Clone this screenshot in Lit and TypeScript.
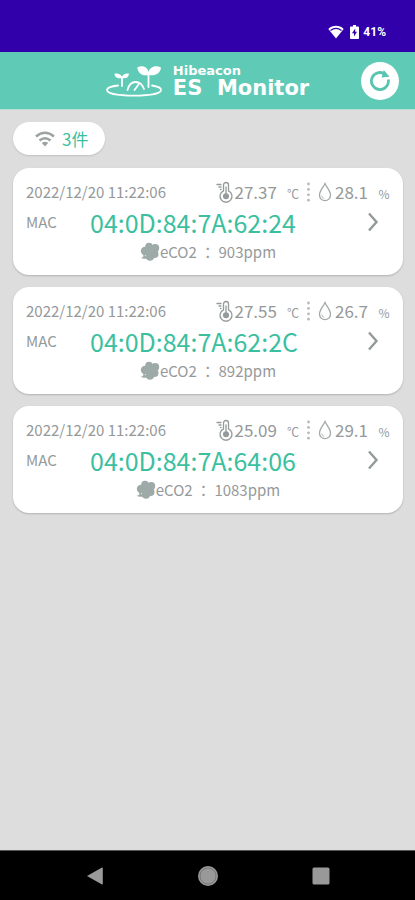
import { LitElement, html, css, svg } from "lit";
import { customElement, property, state } from "lit/decorators.js";

interface Reading {
  time: string;
  temperature: string;
  humidity: string;
  mac: string;
  eco2: number;
}

@customElement("sensor-card")
export class SensorCard extends LitElement {
  @property({ attribute: false }) reading!: Reading;

  static styles = css`
    :host {
      display: block;
    }
    .card {
      display: block;
      box-sizing: border-box;
      width: 100%;
      padding: 9px 13px 8px;
      border-radius: 16px;
      background: #fff;
      box-shadow: 0 1px 2px #0003;
      color: #959999;
      text-decoration: none;
      font-size: 15px;
      line-height: 30px;
      white-space: nowrap;
    }
    .row {
      display: flex;
      align-items: center;
      height: 30px;
    }
    .top {
      justify-content: space-between;
    }
    .values {
      display: flex;
      align-items: center;
      font-size: 17px;
    }
    .thermo {
      width: 18px;
      height: 22px;
      margin-right: 1px;
    }
    .drop {
      width: 14px;
      height: 20px;
      margin-right: 3px;
    }
    .unit {
      width: 12px;
      margin-left: 10px;
      padding-top: 4px;
      font-size: 12px;
      text-align: center;
    }
    .dots {
      width: 3px;
      height: 20px;
      margin: 0 8px;
    }
    .label {
      width: 64px;
    }
    .mac {
      flex: 1;
      color: #3cbf9f;
      font-size: 25px;
    }
    .chevron {
      width: 12px;
      height: 22px;
      margin-right: 11px;
    }
    .gas {
      justify-content: center;
    }
    .cloud {
      width: 20px;
      height: 20px;
    }
  `;

  render() {
    const r = this.reading;
    return html`<a class="card" href="#${r.mac}">
      <div class="row top">
        <time>${r.time}</time>
        <div class="values">
          <svg class="thermo" viewBox="0 0 18 22" fill="none" stroke="#959b9b" stroke-width="1.3" stroke-linecap="round" aria-hidden="true">
            <path d="M7.500 9.800V4a2.500 2.500 0 0 1 5 0v5.800a6 6 0 1 1-5 0Z" />
            <path d="M10 6v8M1 3.500h4M3 6h2M4.500 8.500h.5" />
            <circle cx="10" cy="15.300" r="2.400" fill="#959b9b" />
          </svg>
          <span>${r.temperature}</span>
          <span class="unit">℃</span>
          <svg class="dots" viewBox="0 0 3 20" fill="#b5baba" aria-hidden="true">
            ${[0, 1, 2, 3].map((i) => svg`<circle cx="1.500" cy=${2 + i * 5.4} r="1.400" />`)}
          </svg>
          <svg class="drop" viewBox="0 0 14 20" fill="none" stroke="#a3a9a9" stroke-width="1.3" aria-hidden="true">
            <path d="M7 1.500C5 6 1.500 9 1.500 13.200a5.500 5.500 0 0 0 11 0C12.500 9 9 6 7 1.500Z" />
            <path d="M3.700 13.500q.4 2.600 2.600 3" stroke-width=".8" />
          </svg>
          <span>${r.humidity}</span>
          <span class="unit">%</span>
        </div>
      </div>
      <div class="row">
        <span class="label">MAC</span>
        <span class="mac">${r.mac}</span>
        <svg class="chevron" viewBox="0 0 12 22" fill="none" stroke="#929999" stroke-width="2.400" aria-hidden="true">
          <path d="M2 2.500 9.500 11 2 19.500" />
        </svg>
      </div>
      <div class="row gas">
        <svg class="cloud" viewBox="0 0 20 20" fill="#9daaa8" aria-hidden="true">
          <circle cx="9" cy="4.500" r="3.800" />
          <circle cx="15.200" cy="6" r="4" />
          <circle cx="5" cy="9" r="4.200" />
          <circle cx="14.500" cy="12" r="4" />
          <circle cx="10" cy="14.500" r="4.300" />
          <circle cx="10" cy="9" r="5" />
          <path d="M3 11.500q1.500 4-2.500 4.300 3.500 2 7 .2Z" />
        </svg>
        <span>eCO2 ： ${r.eco2}ppm</span>
      </div>
    </a>`;
  }
}

@customElement("app-root")
export class AppRoot extends LitElement {
  @state() private readings: Reading[] = [
    { time: "2022/12/20 11:22:06", temperature: "27.37", humidity: "28.1", mac: "04:0D:84:7A:62:24", eco2: 903 },
    { time: "2022/12/20 11:22:06", temperature: "27.55", humidity: "26.7", mac: "04:0D:84:7A:62:2C", eco2: 892 },
    { time: "2022/12/20 11:22:06", temperature: "25.09", humidity: "29.1", mac: "04:0D:84:7A:64:06", eco2: 1083 },
  ];

  static styles = css`
    :host {
      display: flex;
      flex-direction: column;
      min-height: 100vh;
      background: #ddd;
      font-family: "Noto Sans CJK JP", sans-serif;
    }
    button {
      display: grid;
      place-items: center;
      padding: 0;
      border: 0;
      background: none;
      cursor: pointer;
    }
    .status {
      display: flex;
      align-items: center;
      justify-content: flex-end;
      height: 40px;
      padding: 12px 29px 0 0;
      background: #3200aa;
      color: #fff;
      font: 700 12px/16px Roboto, sans-serif;
    }
    .wifi {
      width: 16px;
      height: 14px;
      margin-right: 6px;
    }
    .battery {
      width: 9px;
      height: 14px;
      margin-right: 4px;
    }
    .header {
      display: grid;
      grid-template-columns: 1fr auto 1fr;
      align-items: center;
      height: 57px;
      padding: 0 16px;
      background: #5fcab6;
      border-bottom: 1px solid #b9ddd5;
      color: #fff;
    }
    .brand {
      display: flex;
      grid-column: 2;
      align-items: center;
    }
    .logo {
      width: 56px;
      height: 34px;
      margin-right: 11px;
    }
    .title {
      margin: 0;
      font: 700 21px/20px "DejaVu Sans", sans-serif;
      white-space: pre;
    }
    .maker,
    .product {
      display: block;
    }
    .maker {
      font-size: 13px;
      line-height: 14px;
    }
    .refresh {
      justify-self: end;
      width: 38px;
      height: 38px;
      border-radius: 50%;
      background: #fff;
    }
    .main {
      flex: 1;
      padding: 12px 12px 12px 13px;
    }
    .count {
      display: flex;
      align-items: center;
      box-sizing: border-box;
      width: fit-content;
      height: 33px;
      margin-bottom: 13px;
      padding: 0 17px 0 22px;
      border-radius: 17px;
      background: #fff;
      box-shadow: 0 1px 2px #0002;
      color: #3cbf9f;
      font-size: 17px;
    }
    .signal {
      width: 20px;
      height: 16px;
      margin-right: 7px;
    }
    .list {
      display: grid;
      gap: 12px;
      margin: 0;
      padding: 0;
      list-style: none;
    }
    .nav {
      display: flex;
      justify-content: center;
      height: 49px;
      background: #000;
      border-top: 1px solid #555;
    }
    .key {
      width: 113px;
    }
  `;

  render() {
    return html`
      <div class="status">
        <svg class="wifi" viewBox="0 0 16 14" aria-hidden="true">
          <path d="M8 13.500.3 4C4.500-.2 11.500-.2 15.700 4Z" fill="#fff" />
          <path d="M2.500 5.400q5.500-4 11 0" fill="none" stroke="#3200aa" stroke-width="1.200" />
        </svg>
        <svg class="battery" viewBox="0 0 9 14" aria-hidden="true">
          <path d="M3 0h3v1.500h2.200q.8 0 .8.800v10.900q0 .8-.8.800H.8q-.8 0-.8-.8V2.300q0-.8.800-.8H3Z" fill="#fff" />
          <path d="M5.200 3.500 2 8.200h2v3.300L7 6.800H5.200Z" fill="#3200aa" />
        </svg>
        <span>41%</span>
      </div>
      <header class="header">
        <div class="brand">
          <svg class="logo" viewBox="0 0 56 34" fill="none" stroke="#fff" stroke-width="1.800" stroke-linecap="round" aria-hidden="true">
            <path d="M12 21.500C4.500 22.300 1 24 1 26c0 3.500 11 5.600 27 5.600S55 29.500 55 26c0-2-3-3.600-9-4.500" />
            <path d="M16 13v9M42.500 9v14" />
            <path d="M21.500 26q2-8 8-8t8.500 7M28.500 26l4-5.500" />
            <path d="M16 14C11 15 8.500 12.500 8.500 9.700c3.500-.9 6.700.6 7.500 3.300.8-2.700 3.500-4 7-3.300C22.800 12.800 20.500 15 16 14Z" fill="#fff" stroke="none" />
            <path d="M42.500 11C36 12.500 31.500 8.500 31.300 3.500 36.500.500 41.500 3 42.500 8 43.500 3.500 49 .500 55 3.500 54.500 9 49.500 12.500 42.500 11Z" fill="#fff" stroke="none" />
          </svg>
          <h1 class="title"><span class="maker">Hibeacon</span><span class="product">ES  Monitor</span></h1>
        </div>
        <button class="refresh" aria-label="更新">
          <svg width="22" height="22" viewBox="0 0 22 22" fill="none" stroke="#58c5af" stroke-width="2.800" aria-hidden="true">
            <path d="M16 4.200A8.500 8.500 0 1 0 19.300 9.500" />
            <path d="M14.800 0 20.500 6.800 12.500 7.600Z" fill="#58c5af" stroke="none" />
          </svg>
        </button>
      </header>
      <main class="main">
        <div class="count">
          <svg class="signal" viewBox="0 0 20 16" fill="none" stroke="#9da3a3" stroke-width="2.600" aria-hidden="true">
            <path d="M1 5.500q9-7.500 18 0M4.500 9.500q5.500-4.500 11 0" />
            <path d="M10 15.500 6.800 12q3.200-2.400 6.400 0Z" fill="#9da3a3" stroke="none" />
          </svg>
          <span>${this.readings.length}件</span>
        </div>
        <ul class="list">
          ${this.readings.map((r) => html`<li><sensor-card .reading=${r}></sensor-card></li>`)}
        </ul>
      </main>
      <nav class="nav">
        <button class="key" aria-label="戻る">
          <svg width="18" height="18" viewBox="0 0 18 18" fill="#999" aria-hidden="true"><path d="M1 9 16 .500q.800 0 .800.800v15.400q0 .800-.800.800Z" /></svg>
        </button>
        <button class="key" aria-label="ホーム">
          <svg width="20" height="20" viewBox="0 0 20 20" fill="#999" aria-hidden="true">
            <circle cx="10" cy="10" r="10" /><circle cx="10" cy="10" r="8" fill="none" stroke="#777" stroke-width="1" />
          </svg>
        </button>
        <button class="key" aria-label="履歴">
          <svg width="18" height="18" viewBox="0 0 18 18" fill="#999" aria-hidden="true"><rect x=".500" y=".500" width="17" height="17" rx="1.500" /></svg>
        </button>
      </nav>
    `;
  }
}
